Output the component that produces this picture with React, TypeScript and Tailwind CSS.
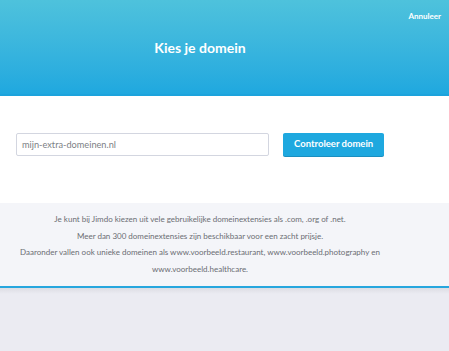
import React from 'react'

const font = { fontFamily: 'Lato, "Open Sans", sans-serif' }

export default function App() {
  return (
    <div className="w-[449px] h-[351px] overflow-hidden bg-[#ebebf2]" style={font}>
      {/* header */}
      <div className="relative h-[96px] bg-gradient-to-b from-[#4ec2dc] to-[#1fa8df] border-b-2 border-[#1ca3dc]">
        <button className="absolute right-[8px] top-[10px] text-[8px] font-bold text-white">Annuleer</button>
        <div className="w-[400px] pt-[38px] text-center">
          <h1 className="text-[14px] font-bold text-white leading-[20px]">Kies je domein</h1>
        </div>
      </div>

      {/* search */}
      <div className="bg-white h-[107px]">
        <div className="w-[400px] px-[16px] pt-[37px] flex gap-[14px]">
          <div className="w-[254px] h-[23px] border border-[#d3d6e0] rounded-[2px] px-[5px] flex items-center text-[9.2px] text-[#7d7f85]">
            mijn-extra-domeinen.nl
          </div>
          <button className="w-[101px] h-[23px] bg-[#1ea8df] rounded-[2px] text-white text-[9.5px] font-bold shadow-[0_1px_0_#1a8fc0]">
            Controleer domein
          </button>
        </div>
      </div>

      {/* info */}
      <div className="bg-[#f4f5f9] h-[85px] border-b-[2px] border-[#26a6de]">
        <div className="w-[400px] pt-[8px] text-center text-[8px] leading-[16.5px] text-[#6b6d73]">
          <p>Je kunt bij Jimdo kiezen uit vele gebruikelijke domeinextensies als .com, .org of .net.</p>
          <p>Meer dan 300 domeinextensies zijn beschikbaar voor een zacht prijsje.</p>
          <p>
            Daaronder vallen ook unieke domeinen als www.voorbeeld.restaurant, www.voorbeeld.photography en
            www.voorbeeld.healthcare.
          </p>
        </div>
      </div>
      <div className="h-[6px] bg-gradient-to-b from-[#dcdde3] to-[#ebebf2]" />
    </div>
  )
}
